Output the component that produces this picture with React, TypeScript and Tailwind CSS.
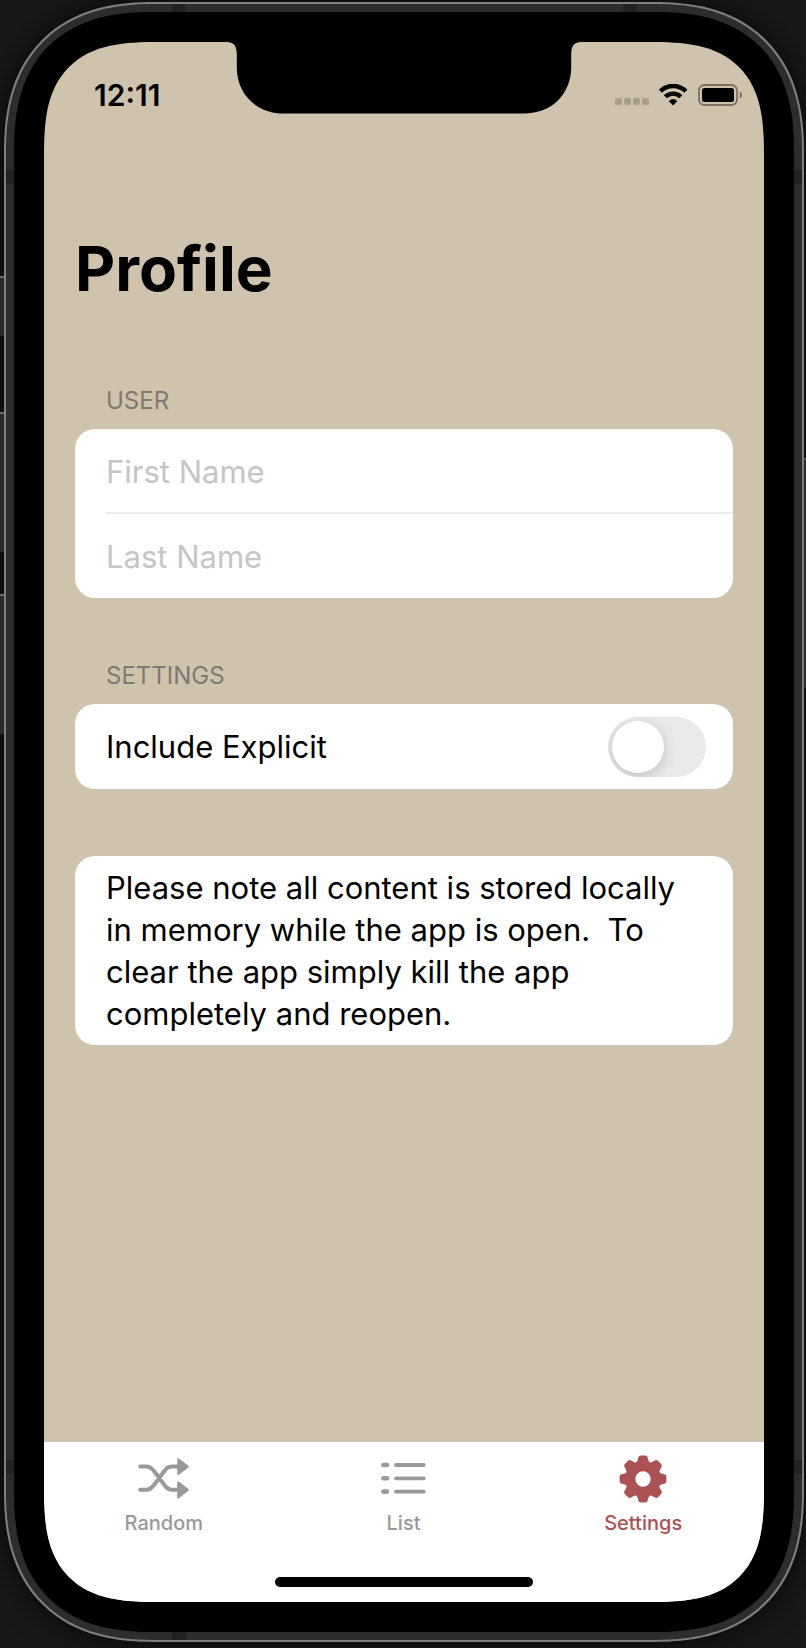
import { useState, type ReactNode } from "react";

function Notch() {
  return (
    <svg
      className="absolute top-0 left-1/2 h-[72px] w-[360px] -translate-x-1/2"
      viewBox="0 0 360 72"
      aria-hidden="true"
    >
      <path
        d="M0 0 H3 C10 .3 12.600 4 12.800 12 V26 C13.200 52 32 71.500 60 71.500 H300 C328 71.500 346.800 52 347.200 26 V12 C347.400 4 350 .3 357 0 H360 Z"
        fill="#000"
      />
    </svg>
  );
}

function WifiIcon() {
  return (
    <svg className="h-[22px] w-[29px]" viewBox="0 0 29 22" fill="none" aria-hidden="true">
      <path d="M1.400 7.200 A18 18 0 0 1 26.800 7.200" stroke="#000" strokeWidth="4.400" />
      <path d="M6.400 12.800 A11 11 0 0 1 21.800 12.800" stroke="#000" strokeWidth="4.400" />
      <path d="M14.100 21.400 L9.800 17 Q14.100 12.800 18.400 17 Z" fill="#000" />
    </svg>
  );
}

function BatteryIcon() {
  return (
    <svg className="h-[22px] w-[45px]" viewBox="0 0 45 22" aria-hidden="true">
      <rect x="1" y="1" width="38" height="20" rx="5.500" fill="none" stroke="#000" strokeOpacity=".42" strokeWidth="1.800" />
      <rect x="4" y="4" width="32" height="14" rx="2.500" fill="#000" />
      <path d="M41.800 7.500 Q44 8.500 44 11 Q44 13.500 41.800 14.500 Z" fill="#000" fillOpacity=".45" />
    </svg>
  );
}

function ShuffleIcon() {
  return (
    <svg className="h-[41px] w-[51px]" viewBox="0 0 51 41" fill="none" aria-hidden="true">
      <path
        d="M2.200 8.500 H8 C12 8.500 13.500 10 16 13 L26 26.500 C28.500 30 30 31.800 34 31.800 H41 M2.200 31.800 H8 C12 31.800 13.500 30 16 27 L26 13.500 C28.500 10 30 8.500 34 8.500 H41"
        stroke="currentColor"
        strokeWidth="4"
        strokeLinecap="round"
        strokeLinejoin="round"
      />
      <path
        d="M40.200 1.200 L49.800 8.600 L40.200 16 Z M40.200 24.400 L49.800 31.900 L40.200 39.400 Z"
        fill="currentColor"
        stroke="currentColor"
        strokeWidth="2"
        strokeLinejoin="round"
      />
    </svg>
  );
}

function ListIcon() {
  return (
    <svg className="h-[33px] w-[45px]" viewBox="0 0 45 33" fill="none" aria-hidden="true">
      <g stroke="currentColor" strokeLinecap="round">
        <path d="M2.400 3 H6 M2.400 16.300 H6 M2.400 29.600 H6" strokeWidth="4.600" />
        <path d="M15 3 H42.800 M15 16.300 H42.800 M15 29.600 H42.800" strokeWidth="3.800" />
      </g>
    </svg>
  );
}

const toothAngles = [0, 45, 90, 135, 180, 225, 270, 315];

function GearIcon() {
  return (
    <svg className="size-12" viewBox="-24 -24 48 48" aria-hidden="true">
      <circle r="12.700" fill="none" stroke="currentColor" strokeWidth="10" />
      {toothAngles.map((angle) => (
        <path
          key={angle}
          transform={`rotate(${angle})`}
          d="M-7.500 -15.500 Q-5.800 -17 -5.300 -19 L-4.700 -21.500 Q-4.200 -23.400 -2.300 -23.400 H2.300 Q4.200 -23.400 4.700 -21.500 L5.300 -19 Q5.800 -17 7.500 -15.500 Z"
          fill="currentColor"
        />
      ))}
    </svg>
  );
}

function StatusBar() {
  return (
    <header className="relative flex h-[105px] items-center justify-between pr-[21px] pl-[50px]">
      <Notch />
      <time className="text-[30px] leading-8 font-semibold">12:11</time>
      <div className="flex items-center gap-[10px]">
        <div className="flex gap-[2px] pt-[14px]">
          <span className="size-[7px] rounded-[2px] bg-[#a89e8c]" />
          <span className="size-[7px] rounded-[2px] bg-[#a89e8c]" />
          <span className="size-[7px] rounded-[2px] bg-[#a89e8c]" />
          <span className="size-[7px] rounded-[2px] bg-[#a89e8c]" />
        </div>
        <WifiIcon />
        <BatteryIcon />
      </div>
    </header>
  );
}

function Heading({ children }: { children: ReactNode }) {
  return <h2 className="mb-4 pl-[31px] text-[24px] leading-6 text-[#7f7972] uppercase">{children}</h2>;
}

function TextRow({ label }: { label: string }) {
  return (
    <input
      type="text"
      aria-label={label}
      placeholder={label}
      className="block h-[84px] w-full bg-transparent pr-[27px] text-[31px] outline-none placeholder:text-[#c5c5c7]"
    />
  );
}

function ExplicitRow() {
  const [on, setOn] = useState(false);
  return (
    <label className="flex h-[85px] items-center justify-between rounded-[20px] bg-white pt-px pr-[27px] pl-[31px] text-[31px]">
      Include Explicit
      <input
        type="checkbox"
        role="switch"
        checked={on}
        onChange={(event) => setOn(event.target.checked)}
        className="h-[60px] w-[98px] cursor-pointer appearance-none overflow-hidden rounded-full bg-[#e9e9eb] p-1 before:block before:size-[52px] before:rounded-full before:bg-white before:shadow-[0_4px_14px_rgba(0,0,0,0.18)] checked:bg-[#34c759] checked:before:ml-auto"
      />
    </label>
  );
}

function Tab({ label, active = false, children }: { label: string; active?: boolean; children: ReactNode }) {
  return (
    <button
      type="button"
      aria-current={active ? "page" : undefined}
      className={`flex flex-1 cursor-pointer flex-col items-center ${active ? "text-[#ab5154]" : "text-[#999999]"}`}
    >
      <span className="flex h-[73px] items-center">{children}</span>
      <span className="text-[20px] leading-4 font-medium">{label}</span>
    </button>
  );
}

function FrameDetails() {
  return (
    <div aria-hidden="true">
      <span className="absolute top-0 left-[166px] h-2 w-[14px] bg-[#222222]" />
      <span className="absolute top-0 right-[165px] h-2 w-[14px] bg-[#222222]" />
      <span className="absolute bottom-0 left-[166px] h-2 w-[14px] bg-[#222222]" />
      <span className="absolute top-[166px] left-0 h-[14px] w-2 bg-[#222222]" />
      <span className="absolute top-[166px] right-0 h-[14px] w-2 bg-[#222222]" />
      <span className="absolute bottom-[166px] left-0 h-[14px] w-2 bg-[#222222]" />
      <span className="absolute right-0 bottom-[166px] h-[14px] w-2 bg-[#222222]" />
      <span className="absolute top-[272px] -left-[6px] h-[60px] w-1 border-t-2 border-[#6a6a6a] bg-[#2b2b2b]" />
      <span className="absolute top-[408px] -left-[6px] h-[140px] w-1 border-t-2 border-[#6a6a6a] bg-[#2b2b2b]" />
      <span className="absolute top-[590px] -left-[6px] h-[140px] w-1 border-t-2 border-[#6a6a6a] bg-[#2b2b2b]" />
      <span className="absolute top-[454px] -right-1 h-[230px] w-[2px] border-t-2 border-[#4a4a4a] bg-[#2b2b2b]" />
    </div>
  );
}

export default function App() {
  return (
    <div
      className="flex min-h-screen overflow-hidden bg-[#191919] pt-[2px] pr-[2px] pb-[6px] pl-1 text-black"
      style={{ fontFamily: 'Inter, "Liberation Sans", sans-serif' }}
    >
      <div className="relative flex flex-1 rounded-[150px] border-2 border-[#7f7f7f] bg-[#2d2d2d] p-2 shadow-[0_0_30px_rgba(0,0,0,0.8)] [corner-shape:superellipse(1.25)]">
        <div className="flex flex-1 rounded-[140px] bg-black p-[30px] [corner-shape:superellipse(1.3)]">
          <div className="flex flex-1 flex-col overflow-hidden rounded-[115px] bg-[#cfc3ad] [corner-shape:superellipse(1.5)]">
            <StatusBar />
            <main className="flex-1 px-[31px] pt-[84px]">
              <h1 className="text-[62px] leading-[76px] font-bold">Profile</h1>
              <section className="mt-[82px]">
                <Heading>User</Heading>
                <div className="rounded-[20px] bg-white pl-[31px]">
                  <TextRow label="First Name" />
                  <hr className="-mt-px border-t-2 border-[#ebebeb]" />
                  <TextRow label="Last Name" />
                </div>
              </section>
              <section className="mt-[66px]">
                <Heading>Settings</Heading>
                <ExplicitRow />
              </section>
              <p className="mt-[67px] rounded-[20px] bg-white pt-[11px] pr-[40px] pb-[10px] pl-[31px] text-[31px] leading-[42px]">
                Please note all content is stored locally in memory while the app is open.&nbsp; To clear the app simply kill the app completely and reopen.
              </p>
            </main>
            <nav className="flex h-[160px] flex-col items-center justify-between bg-white pb-[15px]">
              <div className="flex w-full pr-px">
                <Tab label="Random">
                  <ShuffleIcon />
                </Tab>
                <Tab label="List">
                  <ListIcon />
                </Tab>
                <Tab label="Settings" active>
                  <GearIcon />
                </Tab>
              </div>
              <span className="h-[10px] w-[258px] rounded-full bg-black" />
            </nav>
          </div>
        </div>
        <FrameDetails />
      </div>
    </div>
  );
}
